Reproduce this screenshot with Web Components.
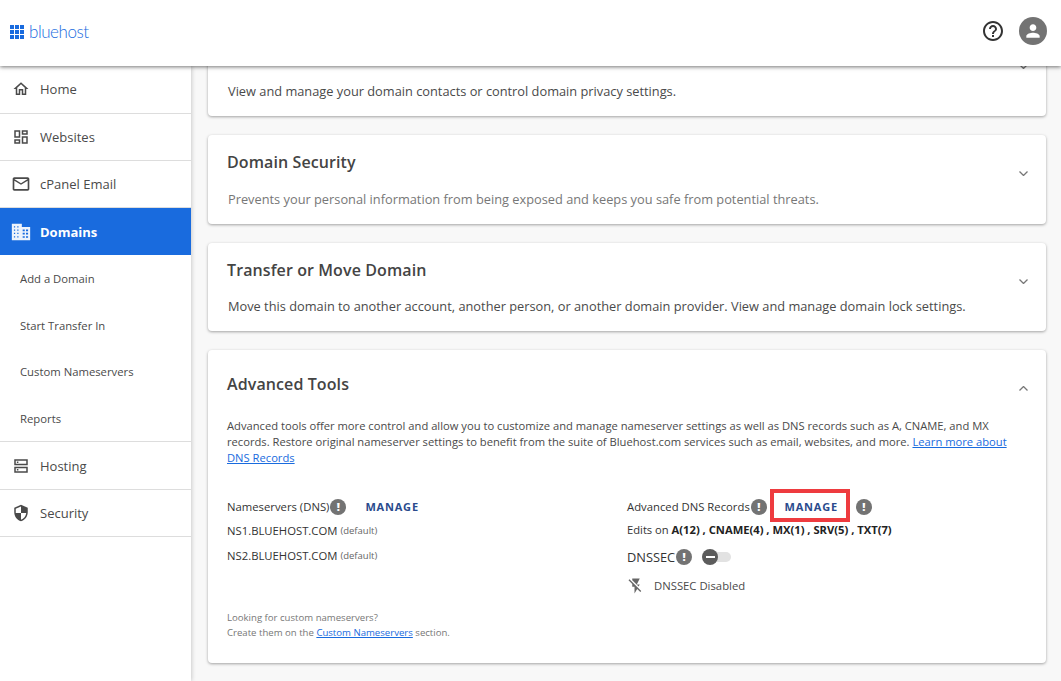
<!DOCTYPE html>
<html lang="en">
<head>
<meta charset="utf-8">
<title>Domains</title>
<style>
html, body { margin: 0; height: 100%; overflow: hidden; }
body { font-family: "Open Sans", "Liberation Sans", sans-serif; color: #3f3f3f; background: #f8f8f8; }
</style>
</head>
<body>
<bh-app>
  <bh-header slot="header"></bh-header>
  <bh-sidebar slot="sidebar">
    <bh-nav-item icon="home" lift>Home</bh-nav-item>
    <bh-nav-item icon="websites">Websites</bh-nav-item>
    <bh-nav-item icon="mail">cPanel Email</bh-nav-item>
    <bh-nav-item icon="domain" active nudge style="height:47px">Domains</bh-nav-item>
    <bh-sub-item>Add a Domain</bh-sub-item>
    <bh-sub-item>Start Transfer In</bh-sub-item>
    <bh-sub-item>Custom Nameservers</bh-sub-item>
    <bh-sub-item last>Reports</bh-sub-item>
    <bh-nav-item icon="hosting" nudge style="height:47.6px">Hosting</bh-nav-item>
    <bh-nav-item icon="security" nudge>Security</bh-nav-item>
  </bh-sidebar>

  <bh-card scrolled>
    <span slot="desc">View and manage your domain contacts or control domain privacy settings.</span>
  </bh-card>
  <bh-card heading="Domain Security">
    <span slot="desc" style="color:#777">Prevents your personal information from being exposed and keeps you safe from potential threats.</span>
  </bh-card>
  <bh-card heading="Transfer or Move Domain">
    <span slot="desc">Move this domain to another account, another person, or another domain provider. View and manage domain lock settings.</span>
  </bh-card>
  <bh-card heading="Advanced Tools" open>
    <bh-advanced></bh-advanced>
  </bh-card>
</bh-app>

<script>
const ICONS = {
  home: 'M12 5.69l5 4.5V18h-2v-6H9v6H7v-7.81l5-4.5M12 3L2 12h3v8h6v-6h2v6h6v-8h3L12 3z',
  websites: 'M19 5v2h-4V5h4M9 5v6H5V5h4m10 8v6h-4v-6h4M9 17v2H5v-2h4M21 3h-8v6h8V3zM11 3H3v10h8V3zm10 8h-8v10h8V11zm-10 4H3v6h8v-6z',
  mail: 'M20 4H4c-1.1 0-1.99.9-1.99 2L2 18c0 1.1.9 2 2 2h16c1.1 0 2-.9 2-2V6c0-1.1-.9-2-2-2zm0 14H4V8l8 5 8-5v10zm-8-7L4 6h16l-8 5z',
  domain: 'M1 2h12v4h10v16H1V2zm2.5 3v1.5h1.5V5H3.5zm4 0v1.5H9V5H7.5zm-4 4v1.5h1.5V9H3.5zm4 0v1.5H9V9H7.5zm-4 4v1.5h1.5V13H3.5zm4 0v1.5H9V13H7.5zm-4 4v1.5h1.5V17H3.5zm4 0v1.5H9V17H7.5zM14 9v2h2.5V9H14zm4 0v2h2.5V9H18zm-4 4v2h2.5v-2H14zm4 0v2h2.5v-2H18zm-4 4v2h2.5v-2H14zm4 0v2h2.5v-2H18z',
  hosting: 'M3 3h18v8H3V3zm2 2v4h14V5H5zm1.5 1h2v2h-2V6zM3 13h18v8H3v-8zm2 2v4h14v-4H5zm1.5 1h2v2h-2v-2z',
  security: 'M12 1L3 5v6c0 5.55 3.84 10.74 9 12 5.16-1.26 9-6.45 9-12V5l-9-4zm0 10.99h7c-.53 4.12-3.28 7.79-7 8.94V12H5V6.3l7-3.11v8.8z',
  help: 'M11 18h2v-2h-2v2zm1-16C6.48 2 2 6.48 2 12s4.48 10 10 10 10-4.48 10-10S17.52 2 12 2zm0 18c-4.41 0-8-3.59-8-8s3.59-8 8-8 8 3.59 8 8-3.59 8-8 8zm0-14c-2.21 0-4 1.79-4 4h2c0-1.1.9-2 2-2s2 .9 2 2c0 2-3 1.75-3 5h2c0-2.25 3-2.5 3-5 0-2.21-1.79-4-4-4z',
  person: 'M12 12c2.21 0 4-1.79 4-4s-1.79-4-4-4-4 1.79-4 4 1.79 4 4 4zm0 2c-2.67 0-8 1.34-8 4v2h16v-2c0-2.66-5.33-4-8-4z',
  flashoff: 'M3.27 3L2 4.27l5 5V13h3v9l3.58-6.14L17.73 20 19 18.73 3.27 3zM17 10h-4l4-8H7v2.18l8.46 8.46L17 10z'
};

class BhApp extends HTMLElement{
    constructor(){
        super();
        this.attachShadow({mode: 'open'});
    }
    connectedCallback(){
        this.shadowRoot.innerHTML = `
            <style>
                :host{ display: flex; flex-direction: column; height: 100vh; }
                .top{ position: relative; z-index: 3; }
                .body{ display: flex; flex: 1; min-height: 0; }
                .side{ position: relative; z-index: 2; }
                main{
                    flex: 1;
                    overflow: hidden;
                    padding: 0 15px 0 17px;
                    display: flex;
                    flex-direction: column;
                    gap: 19px;
                }
            </style>
            <div class="top"><slot name="header"></slot></div>
            <div class="body">
                <div class="side"><slot name="sidebar"></slot></div>
                <main><slot></slot></main>
            </div>
        `;
    }
}
window.customElements.define('bh-app', BhApp);

class BhHeader extends HTMLElement{
    constructor(){
        super();
        this.attachShadow({mode: 'open'});
    }
    connectedCallback(){
        let cells = '';
        for(let y = 0; y < 3; y++){
            for(let x = 0; x < 3; x++){
                cells += `<rect x="${x * 5}" y="${y * 5}" width="4" height="4"/>`;
            }
        }
        this.shadowRoot.innerHTML = `
            <style>
                :host{
                    display: flex;
                    align-items: center;
                    height: 66px;
                    box-sizing: border-box;
                    padding: 0 14px 4px 10px;
                    background: #fff;
                    box-shadow: 0 1px 4px rgba(0,0,0,.55);
                }
                .logo{ display: flex; align-items: center; gap: 5px; flex: 1; margin-top: 2px; }
                .logo svg{ fill: #196bde; }
                .name{ font: 300 17px/20px Lato, "Open Sans", sans-serif; letter-spacing: -.45px; color: #196bde; }
                .help{ fill: #333; margin-right: 14px; display: block; }
                .user{
                    width: 28px; height: 28px; border-radius: 50%;
                    background: #737373;
                    display: flex; align-items: center; justify-content: center;
                }
                .user svg{ fill: #fff; }
            </style>
            <div class="logo">
                <svg width="14" height="14" viewBox="0 0 14 14">${cells}</svg>
                <span class="name">bluehost</span>
            </div>
            <svg class="help" width="24" height="24" viewBox="0 0 24 24"><path d="${ICONS.help}"/></svg>
            <div class="user"><svg width="20" height="20" viewBox="0 0 24 24"><path d="${ICONS.person}"/></svg></div>
        `;
    }
}
window.customElements.define('bh-header', BhHeader);

class BhSidebar extends HTMLElement{
    constructor(){
        super();
        this.attachShadow({mode: 'open'});
    }
    connectedCallback(){
        this.shadowRoot.innerHTML = `
            <style>
                :host{
                    display: block;
                    width: 191px;
                    height: 100%;
                    box-sizing: border-box;
                    padding-top: .4px;
                    background: #fff;
                    box-shadow: 1px 0 4px rgba(0,0,0,.18);
                }
            </style>
            <slot></slot>
        `;
    }
}
window.customElements.define('bh-sidebar', BhSidebar);

class BhNavItem extends HTMLElement{
    constructor(){
        super();
        this.attachShadow({mode: 'open'});
    }
    connectedCallback(){
        const icon = this.getAttribute('icon');
        const big = icon === 'mail' || icon === 'domain';
        this.shadowRoot.innerHTML = `
            <style>
                :host{
                    display: flex;
                    align-items: center;
                    height: 47.3px;
                    box-sizing: border-box;
                    border-bottom: 1px solid #ddd;
                    font-size: 13px;
                    color: #4a4a4a;
                }
                :host([nudge]){ padding-top: 1px; }
                :host([lift]){ padding-bottom: 1px; }
                :host([active]){
                    background: #196bde;
                    color: #fff;
                    font-weight: 700;
                    border-bottom-color: #196bde;
                }
                .ic{ width: 40px; display: flex; justify-content: center; padding-left: 2px; box-sizing: border-box; flex: none; }
                svg{ fill: #4a4a4a; display: block; }
                :host([active]) svg{ fill: #fff; opacity: .92; }
            </style>
            <div class="ic"><svg width="${big ? 20 : 18}" height="${big ? 20 : 18}" viewBox="0 0 24 24"><path fill-rule="evenodd" d="${ICONS[icon]}"/></svg></div>
            <slot></slot>
        `;
    }
}
window.customElements.define('bh-nav-item', BhNavItem);

class BhSubItem extends HTMLElement{
    constructor(){
        super();
        this.attachShadow({mode: 'open'});
    }
    connectedCallback(){
        this.shadowRoot.innerHTML = `
            <style>
                :host{
                    display: flex;
                    align-items: center;
                    height: 46.6px;
                    box-sizing: border-box;
                    padding-left: 20px;
                    font-size: 11.3px;
                    color: #4a4a4a;
                }
                :host([last]){ height: 47px; padding-top: 1px; border-bottom: 1px solid #ddd; }
            </style>
            <slot></slot>
        `;
    }
}
window.customElements.define('bh-sub-item', BhSubItem);

class BhCard extends HTMLElement{
    constructor(){
        super();
        this.attachShadow({mode: 'open'});
    }
    connectedCallback(){
        const heading = this.getAttribute('heading') || '';
        this.shadowRoot.innerHTML = `
            <style>
                :host{
                    display: block;
                    flex: none;
                    box-sizing: border-box;
                    padding: 16px 19px 15px 19px;
                    background: #fff;
                    border-radius: 4px;
                    box-shadow: 0 1px 3px rgba(0,0,0,.35);
                    color: #4a4a4a;
                }
                :host([scrolled]){ margin-top: -38.5px; }
                :host([open]){ padding-top: 23px; padding-bottom: 0; height: 313px; }
                .head{ display: flex; justify-content: space-between; height: 22px; }
                h2{ margin: 0; font-size: 16px; line-height: 22px; font-weight: 600; letter-spacing: .1px; color: #444; }
                .chev{ display: block; margin: 20px -1px 0 0; fill: none; stroke: #777; stroke-width: 1.3; flex: none; }
                :host([open]) .chev{ margin-top: 13px; transform: rotate(180deg); }
                .desc{ margin-top: 15.6px; margin-left: 1px; font-size: 12.8px; line-height: 20px; }
            </style>
            <div class="head">
                <h2>${heading}</h2>
                <svg class="chev" width="9" height="5" viewBox="0 0 9 5"><path d="M.5 .5L4.5 4.5L8.5 .5"/></svg>
            </div>
            <div class="desc"><slot name="desc"></slot></div>
            <slot></slot>
        `;
        if(this.hasAttribute('open')){
            this.shadowRoot.querySelector('.desc').style.display = 'none';
        }
    }
}
window.customElements.define('bh-card', BhCard);

class BhTip extends HTMLElement{
    constructor(){
        super();
        this.attachShadow({mode: 'open'});
    }
    connectedCallback(){
        this.shadowRoot.innerHTML = `
            <style>
                :host{
                    display: inline-flex;
                    align-items: center;
                    justify-content: center;
                    width: 16px; height: 16px;
                    border-radius: 50%;
                    background: #737373;
                    color: #fff;
                    font: 800 11px/16px "Open Sans", sans-serif;
                    flex: none;
                }
            </style>!
        `;
    }
}
window.customElements.define('bh-tip', BhTip);

class BhToggle extends HTMLElement{
    constructor(){
        super();
        this.attachShadow({mode: 'open'});
    }
    connectedCallback(){
        this.shadowRoot.innerHTML = `
            <style>
                :host{ display: inline-flex; align-items: center; width: 29px; height: 16px; position: relative; flex: none; }
                .track{ width: 100%; height: 10px; margin-left: 1px; border-radius: 5px; background: #e2e2e2; }
                .knob{
                    position: absolute; left: 0; top: 0;
                    width: 16px; height: 16px; border-radius: 50%;
                    background: #5c5c5c;
                    display: flex; align-items: center; justify-content: center;
                }
                .knob i{ display: block; width: 9px; height: 2px; background: #fff; }
            </style>
            <div class="track"></div>
            <div class="knob"><i></i></div>
        `;
    }
}
window.customElements.define('bh-toggle', BhToggle);

class BhAdvanced extends HTMLElement{
    constructor(){
        super();
        this.attachShadow({mode: 'open'});
    }
    connectedCallback(){
        this.shadowRoot.innerHTML = `
            <style>
                :host{ display: block; font-size: 11.3px; color: #4a4a4a; }
                a{ color: #196bde; text-decoration: underline; }
                .intro{ margin: 23px 0 0; line-height: 16px; max-width: 790px; font-size: 11.2px; }
                .cols{ display: grid; grid-template-columns: 400px 1fr; margin-top: 28.5px; }
                .row{ display: flex; align-items: center; color: #333; }
                .title{ height: 24px; }
                .title bh-tip{ margin-left: 1px; }
                .manage{ font-weight: 700; font-size: 11px; letter-spacing: .8px; color: #2a4b8d; }
                .left .manage{ margin-left: 19px; }
                .boxed{
                    display: flex; align-items: center; justify-content: center;
                    box-sizing: border-box;
                    width: 80px; height: 33px;
                    margin: -3px 5px 0 3px;
                    padding: 3px 0 0 3px;
                    border: 4px solid #ee3b3f;
                }
                .line{ height: 24px; box-sizing: border-box; }
                .right .line{ padding-bottom: 2px; font-size: 11.2px; }
                .ns{ height: 26px; }
                small{ font-size: 9.5px; color: #666; margin-left: 3px; }
                b{ font-weight: 700; color: #222; }
                .sec{ height: 29px; font-size: 12.8px; }
                .sec bh-tip{ margin-left: 1px; }
                .sec bh-toggle{ margin-left: 10px; }
                .off{ height: 28px; color: #4a4a4a; }
                .off svg{ fill: #666; display: block; margin-right: 9px; }
                .left{ display: flex; flex-direction: column; }
                .foot{ margin-top: 41px; font-size: 9.6px; line-height: 15px; color: #777; }
            </style>
            <p class="intro">Advanced tools offer more control and allow you to customize and manage nameserver settings as well as DNS records such as A, CNAME, and MX records. Restore original nameserver settings to benefit from the suite of Bluehost.com services such as email, websites, and more. <a href="#">Learn more about DNS Records</a></p>
            <div class="cols">
                <div class="left">
                    <div class="row title">Nameservers (DNS)<bh-tip></bh-tip><span class="manage">MANAGE</span></div>
                    <div class="row line">NS1.BLUEHOST.COM <small>(default)</small></div>
                    <div class="row ns">NS2.BLUEHOST.COM <small>(default)</small></div>
                    <div class="foot">Looking for custom nameservers?<br>Create them on the <a href="#">Custom Nameservers</a> section.</div>
                </div>
                <div class="right">
                    <div class="row title">Advanced DNS Records<bh-tip></bh-tip><span class="boxed"><span class="manage">MANAGE</span></span><bh-tip></bh-tip></div>
                    <div class="row line"><span>Edits on&nbsp;<b>A(12) , CNAME(4) , MX(1) , SRV(5) , TXT(7)</b></span></div>
                    <div class="row sec">DNSSEC<bh-tip></bh-tip><bh-toggle></bh-toggle></div>
                    <div class="row off"><svg width="18" height="18" viewBox="0 0 24 24"><path d="${ICONS.flashoff}"/></svg>DNSSEC Disabled</div>
                </div>
            </div>
        `;
    }
}
window.customElements.define('bh-advanced', BhAdvanced);
</script>
</body>
</html>
